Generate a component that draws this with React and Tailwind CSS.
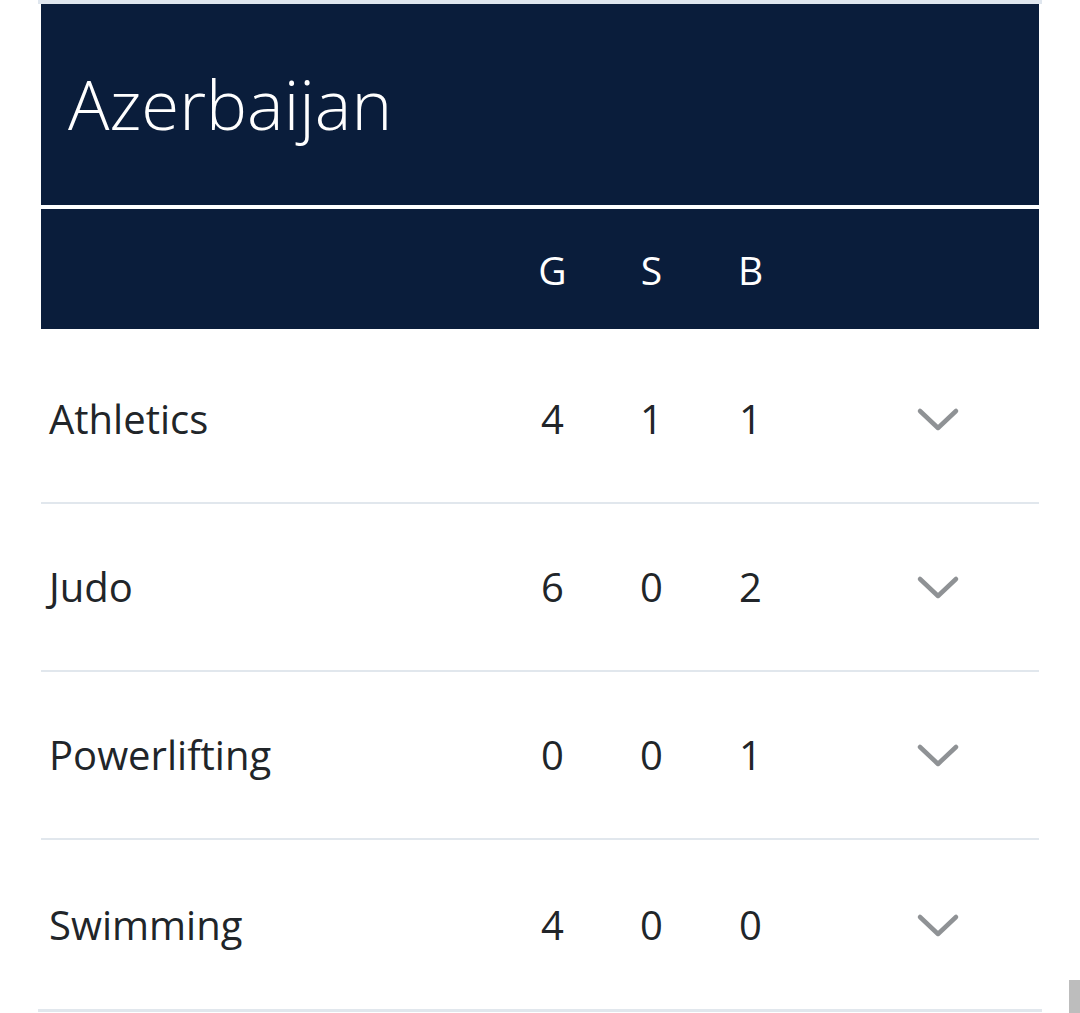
import React from "react";

const rows = [
  { name: "Athletics", g: 4, s: 1, b: 1 },
  { name: "Judo", g: 6, s: 0, b: 2 },
  { name: "Powerlifting", g: 0, s: 0, b: 1 },
  { name: "Swimming", g: 4, s: 0, b: 0 },
];

function Chevron() {
  return (
    <svg width="44" height="26" viewBox="0 0 44 26" fill="none" className="mt-[2px]">
      <path d="M4 4 L22 21 L40 4" stroke="#8f9295" strokeWidth="4.5" strokeLinecap="round" strokeLinejoin="round" />
    </svg>
  );
}

export default function App() {
  return (
    <div className="relative w-[1080px] h-[1013px] bg-white overflow-hidden" style={{ fontFamily: '"Open Sans", "Noto Sans", sans-serif' }}>
      <div className="ml-[38px] w-[1004px]">
        <div className="h-[4px] bg-[#dfe6ee]" />
        <div className="mx-[3px]">
          <div className="h-[201px] bg-[#0a1d3b] flex items-center pl-[27px]">
            <span className="text-white text-[69px] font-light leading-none -mt-[2px]">Azerbaijan</span>
          </div>
          <div className="h-[4px] bg-white" />
          <div className="h-[120px] bg-[#0a1d3b] flex items-center text-white text-[39px] leading-none">
            <div className="w-[462px]" />
            <div className="w-[99px] text-center">G</div>
            <div className="w-[99px] text-center">S</div>
            <div className="w-[99px] text-center">B</div>
          </div>
          {rows.map((r, i) => (
            <div
              key={r.name}
              className={`flex items-center text-[#212529] text-[40px] leading-none ${i === 0 ? "h-[175px] pt-[7px]" : i === rows.length - 1 ? "h-[169px]" : "h-[168px]"} ${i === rows.length - 1 ? "" : "border-b-[2px] border-[#e1e7ed]"}`}
            >
              <div className="w-[462px] pl-[8px]">{r.name}</div>
              <div className="w-[99px] text-center">{r.g}</div>
              <div className="w-[99px] text-center">{r.s}</div>
              <div className="w-[99px] text-center">{r.b}</div>
              <div className="w-[116px]" />
              <Chevron />
            </div>
          ))}
        </div>
        <div className="h-[3px] bg-[#e1e7ed]" />
      </div>
      <div className="absolute left-[1069px] top-[980px] w-[11px] h-[33px] bg-[#bdbdbd]" />
    </div>
  );
}
